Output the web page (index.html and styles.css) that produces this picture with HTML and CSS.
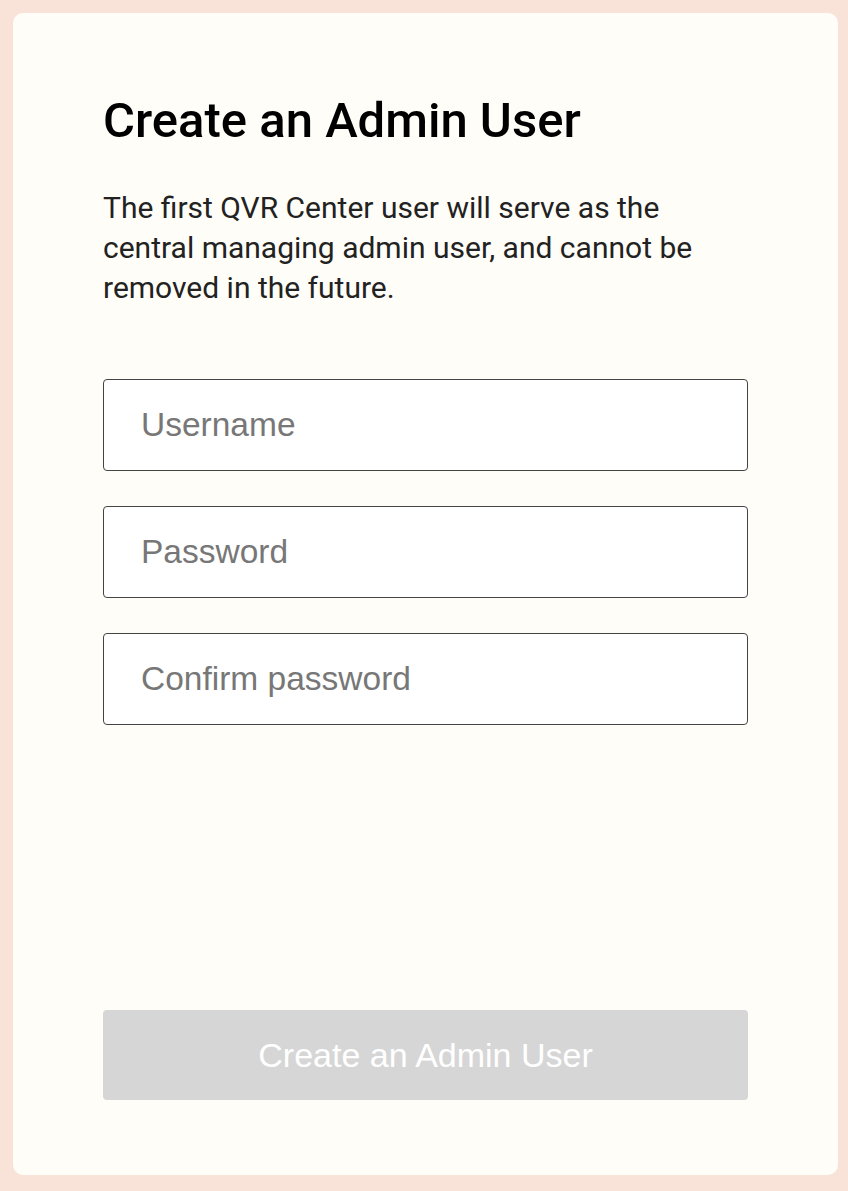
FILE: index.html
```html
<!DOCTYPE html>
<html lang="en">

<head>
    <meta charset="UTF-8">
    <meta name="viewport" content="width=device-width, initial-scale=1.0">
    <title>Create an Admin User</title>
    <link rel="stylesheet" href="styles.css">
</head>

<body>
    <div class="card">
        <h1 class="title">Create an Admin User</h1>
        <p class="desc">The first QVR Center user will serve as the central managing admin user, and cannot be removed in the future.</p>

        <form class="form">
            <input class="field" type="text" placeholder="Username">
            <input class="field" type="password" placeholder="Password">
            <input class="field" type="password" placeholder="Confirm password">

            <button class="submit" type="button" disabled>Create an Admin User</button>
        </form>
    </div>
</body>

</html>
```

FILE: styles.css
```css
* {
    margin: 0;
    padding: 0;
    box-sizing: border-box;
}

html,
body {
    height: 100%;
}

body {
    background: #f9e3d8;
    padding: 13px 10px 16px 13px;
    font-family: Roboto, "Liberation Sans", sans-serif;
}

.card {
    height: 100%;
    background: #fffdf7;
    border-radius: 10px;
    padding: 80px 90px 75px 90px;
    display: flex;
    flex-direction: column;
}

.title {
    font-size: 49px;
    font-weight: 500;
    color: #000;
    line-height: 56px;
}

.desc {
    margin-top: 39px;
    font-size: 30px;
    line-height: 40px;
    color: #222;
}

.form {
    flex: 1;
    display: flex;
    flex-direction: column;
    gap: 35px;
    margin-top: 71px;
}

.field {
    height: 92px;
    border: 1px solid #444;
    border-radius: 4px;
    background: #fff;
    padding: 0 37px;
    font-family: "Liberation Sans", Arial, sans-serif;
    font-size: 33.5px;
    color: #333;
    outline: none;
}

.field::placeholder {
    color: #777;
}

.submit {
    margin-top: auto;
    height: 90px;
    border: none;
    border-radius: 4px;
    background: #d6d6d6;
    color: #fff;
    font-family: "Liberation Sans", Arial, sans-serif;
    font-size: 34px;
}
```
